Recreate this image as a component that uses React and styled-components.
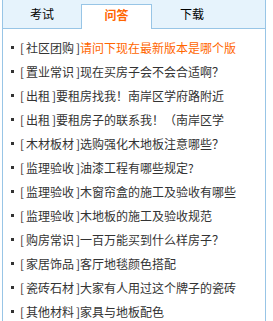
import styled, { createGlobalStyle } from "styled-components";

const GlobalStyle = createGlobalStyle`
  body {
    margin: 0;
    background: #fff;
    font-family: "Noto Sans CJK SC", "Liberation Sans", sans-serif;
  }
`;

const Box = styled.div`
  margin-left: 2px;
  width: 262px;
  height: 321px;
  border-left: 1px solid #98c5e6;
  border-right: 1px solid #98c5e6;
  overflow: hidden;
`;

const TabBar = styled.div`
  display: flex;
  height: 24px;
  padding-top: 4px;
  background: #e6f3fc;
  border-bottom: 1px solid #98c5e6;
`;

const Tab = styled.div`
  width: ${(p) => p.$w}px;
  box-sizing: border-box;
  height: ${(p) => (p.$active ? 25 : 24)}px;
  margin-bottom: ${(p) => (p.$active ? -1 : 0)}px;
  line-height: 20px;
  text-align: center;
  font-size: 12px;
  color: ${(p) => (p.$active ? "#ff6600" : "#000")};
  font-weight: ${(p) => (p.$active ? "bold" : "normal")};
  background: ${(p) => (p.$active ? "#fff" : "transparent")};
  border: ${(p) => (p.$active ? "1px solid #98c5e6" : "none")};
  border-bottom: none;
`;

const List = styled.ul`
  list-style: none;
  margin: 0;
  padding: 6px 0 0 8px;
`;

const Item = styled.li`
  display: flex;
  align-items: center;
  height: 24px;
  font-size: 12px;
  color: #333;
  white-space: nowrap;
  &::before {
    content: "";
    width: 3px;
    height: 3px;
    margin-right: 6px;
    background: #333;
    flex: none;
  }
`;

const Bracket = styled.span`
  display: inline-block;
  width: 6px;
  text-align: ${(p) => (p.$close ? "right" : "left")};
`;

const Hot = styled.span`
  color: #ff6600;
`;

const tabs = [
  { label: "考试", w: 78 },
  { label: "问答", w: 71, active: true },
  { label: "下载", w: 80 },
];

const items = [
  ["社区团购", "请问下现在最新版本是哪个版", true],
  ["置业常识", "现在买房子会不会合适啊？"],
  ["出租", "要租房找我！南岸区学府路附近"],
  ["出租", "要租房子的联系我！（南岸区学"],
  ["木材板材", "选购强化木地板注意哪些？"],
  ["监理验收", "油漆工程有哪些规定?"],
  ["监理验收", "木窗帘盒的施工及验收有哪些"],
  ["监理验收", "木地板的施工及验收规范"],
  ["购房常识", "一百万能买到什么样房子？"],
  ["家居饰品", "客厅地毯颜色搭配"],
  ["瓷砖石材", "大家有人用过这个牌子的瓷砖"],
  ["其他材料", "家具与地板配色"],
];

export default function App() {
  return (
    <>
      <GlobalStyle />
      <Box>
        <TabBar>
          {tabs.map((t) => (
            <Tab key={t.label} $w={t.w} $active={t.active}>
              {t.label}
            </Tab>
          ))}
        </TabBar>
        <List>
          {items.map(([cat, title, hot], i) => (
            <Item key={i}>
              <Bracket>[</Bracket>
              {cat}
              <Bracket $close>]</Bracket>
              {hot ? <Hot>{title}</Hot> : title}
            </Item>
          ))}
        </List>
      </Box>
    </>
  );
}
